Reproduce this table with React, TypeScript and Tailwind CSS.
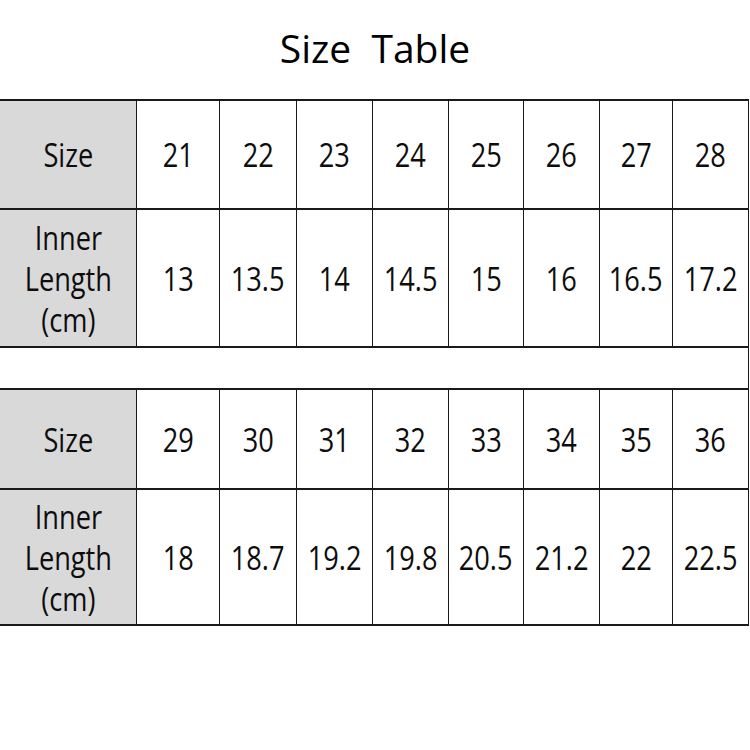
import React from "react";

const cols = "grid grid-cols-[137px_83px_77px_76px_76px_75px_76px_73px_76px]";

function Cell({ children, gray = false }: { children: React.ReactNode; gray?: boolean }) {
  return (
    <div
      className={
        "flex items-center justify-center border-r border-[#1a1a1a] text-center " +
        (gray ? "bg-[#d9d9d9]" : "bg-white")
      }
    >
      <span className="inline-block scale-x-[0.85] leading-[41px]">{children}</span>
    </div>
  );
}

function Block({ sizes, lens, h1, h2 }: { sizes: string[]; lens: string[]; h1: string; h2: string }) {
  return (
    <div className="border-y-2 border-[#1a1a1a]">
      <div className={cols + " " + h1 + " border-b-2 border-[#1a1a1a]"}>
        <Cell gray>Size</Cell>
        {sizes.map((s) => (
          <Cell key={s}>{s}</Cell>
        ))}
      </div>
      <div className={cols + " " + h2}>
        <Cell gray>
          Inner
          <br />
          Length
          <br />
          (cm)
        </Cell>
        {lens.map((s, i) => (
          <Cell key={i}>{s}</Cell>
        ))}
      </div>
    </div>
  );
}

export default function App() {
  return (
    <div
      className="w-[750px] h-[750px] bg-white text-[#0d0d0d] overflow-hidden"
      style={{ fontFamily: '"Open Sans", "Noto Sans CJK KR", sans-serif' }}
    >
      <div className="h-[99px] flex items-center justify-center text-[39px] leading-none pb-[4px] text-black">
        Size&nbsp;&nbsp;Table
      </div>
      <div className="w-[749px] text-[32px]">
        <Block
          sizes={["21", "22", "23", "24", "25", "26", "27", "28"]}
          lens={["13", "13.5", "14", "14.5", "15", "16", "16.5", "17.2"]}
          h1="h-[109px]"
          h2="h-[136px]"
        />
        <div className="h-[40px] border-r border-[#1a1a1a]" />
        <Block
          sizes={["29", "30", "31", "32", "33", "34", "35", "36"]}
          lens={["18", "18.7", "19.2", "19.8", "20.5", "21.2", "22", "22.5"]}
          h1="h-[100px]"
          h2="h-[134px]"
        />
      </div>
    </div>
  );
}
